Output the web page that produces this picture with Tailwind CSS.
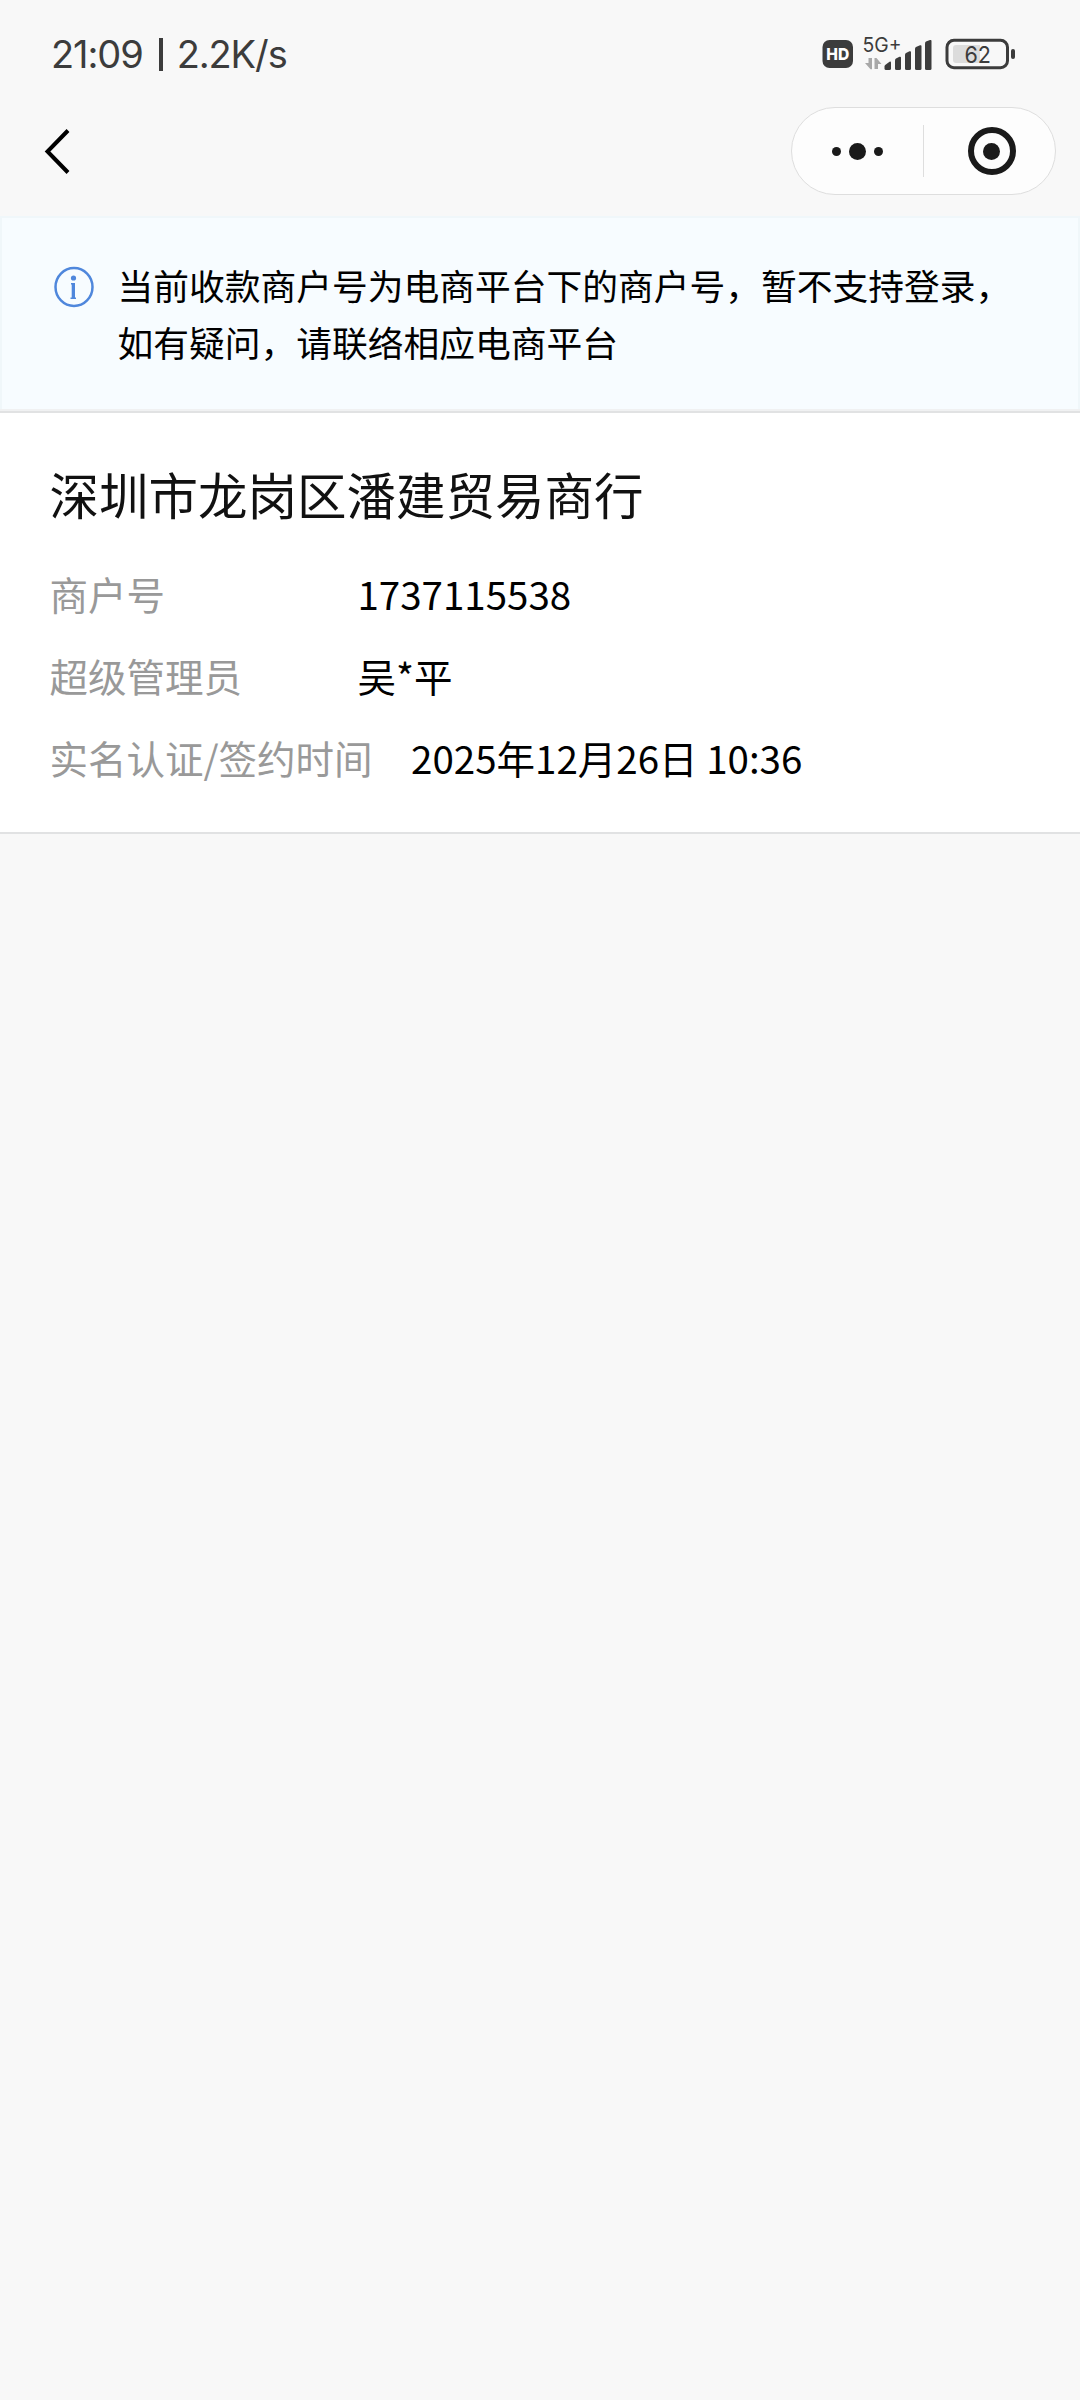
<!DOCTYPE html>
<html lang="zh-CN">
  <head>
    <meta charset="UTF-8" />
    <meta name="viewport" content="width=device-width, initial-scale=1.0" />
    <title>商户信息</title>
    <script src="https://cdn.jsdelivr.net/npm/@tailwindcss/browser@4"></script>
  </head>
  <body class="min-h-screen bg-[#f8f8f8] font-['Noto_Sans_CJK_SC',sans-serif] text-black">
    <!-- Status bar -->
    <div class="flex h-[108px] items-center justify-between pr-[64px] pl-[51px] text-[#3c3c3c]">
      <div class="flex items-center font-['Inter',sans-serif] text-[38px] leading-none tracking-[-1.1px]">
        <span>21:09</span>
        <span class="mr-[14px] ml-[16px] h-[33px] w-[4px] bg-[#3c3c3c]"></span>
        <span>2.2K/s</span>
      </div>
      <div class="flex items-center">
        <svg class="h-[50px] w-[196px]" viewBox="820 29 196 50">
          <rect x="822.5" y="40" width="30.5" height="28" rx="7" fill="#3c3c3c" />
          <text x="837.8" y="59.8" font-family="Inter" font-size="16.5" font-weight="800" text-anchor="middle" textLength="23" lengthAdjust="spacingAndGlyphs" fill="#fff">HD</text>
          <text x="862.5" y="51.8" font-family="Inter" font-size="20" textLength="39" lengthAdjust="spacingAndGlyphs" fill="#3c3c3c">5G+</text>
          <path d="M868.500 58h3.500v11.300h-1.500l-5.500-6.300h3.500zM874.500 58h2l5 6h-3.500v5h-3.500z" fill="#a8a8a8" />
          <g fill="#3c3c3c">
            <path d="M884.500 66.500q0-1 1-1.800l4-3q1.500-.8 1.500.8v6q0 1.500-1.500 1.500h-3.500q-1.500 0-1.500-1.500z" />
            <path d="M895 60.500q0-1.500 1-2l3.500-1.700q1.500-.5 1.500 1v10.700q0 1.500-1.500 1.500h-3q-1.500 0-1.500-1.500z" />
            <path d="M905 55q0-1.500 1-2l3.500-1.700q1.500-.5 1.500 1v16.200q0 1.500-1.500 1.500h-3q-1.500 0-1.500-1.500z" />
            <path d="M915 49q0-1.500 1-2l4-1.700q1.500-.5 1.500 1v22.200q0 1.500-1.500 1.500h-3.500q-1.500 0-1.500-1.500z" />
            <path d="M925 43.500q0-1.500 1-2l4-1.500q1.500-.5 1.500 1v27.500q0 1.500-1.500 1.500h-3.500q-1.500 0-1.500-1.500z" />
          </g>
          <rect x="947" y="40.300" width="60.500" height="27.400" rx="7" fill="none" stroke="#3c3c3c" stroke-width="3" />
          <path d="M956 45h24v18h-24q-3 0-3-3v-12q0-3 3-3z" fill="#dcdcdc" />
          <rect x="1011" y="49" width="4" height="10" rx="2" fill="#3c3c3c" />
          <text x="977.700" y="62.700" font-family="Inter" font-size="23.500" text-anchor="middle" textLength="26.500" lengthAdjust="spacingAndGlyphs" fill="#3c3c3c">62</text>
        </svg>
      </div>
    </div>

    <!-- Navigation bar -->
    <div class="flex h-[108px] items-start justify-between pr-6 pl-11">
      <svg class="mt-[19px] h-[50px] w-[28px]" viewBox="0 0 28 50">
        <path d="M24 3.500L3.500 24.500L24 45.500" fill="none" stroke="#000" stroke-width="4" />
      </svg>
      <div class="-mt-px flex h-[88px] w-[265px] items-center rounded-full border border-[#dedede] bg-[#fdfdfd]">
        <div class="flex w-[131px] items-center justify-center gap-2">
          <span class="size-[9px] rounded-full bg-[#1a1a1a]"></span>
          <span class="size-[17px] rounded-full bg-[#1a1a1a]"></span>
          <span class="size-[9px] rounded-full bg-[#1a1a1a]"></span>
        </div>
        <div class="h-[52px] w-px bg-[#dedede]"></div>
        <div class="flex flex-1 items-center justify-center pl-[4px]">
          <div class="flex size-12 items-center justify-center rounded-full border-6 border-[#1a1a1a]">
            <span class="size-[17px] rounded-full bg-[#1a1a1a]"></span>
          </div>
        </div>
      </div>
    </div>

    <!-- Notice -->
    <div class="flex h-[193px] gap-[23.5px] border-2 border-b-0 border-[#f0f7fa] bg-[#f7fcff] pt-[38px] pl-[52px]">
      <svg class="mt-[10px] h-[42px] w-[40px] shrink-0" viewBox="0 0 40 42" fill="#4f87dc">
        <ellipse cx="20" cy="21" rx="18.500" ry="19" fill="none" stroke="#4f87dc" stroke-width="2.500" />
        <circle cx="19.500" cy="12" r="2.600" />
        <path d="M17 17h4v14.500h1v1.500h-5.500v-1.500h1.200v-13h-.7z" />
      </svg>
      <p class="text-[35.75px] leading-[57px]">
        当前收款商户号为电商平台下的商户号，暂不支持登录，<br />如有疑问，请联络相应电商平台
      </p>
    </div>
    <div class="h-[2px] bg-[#f0f1f2]"></div>

    <!-- Merchant details -->
    <div class="h-[423px] border-y-2 border-[#e1e2e3] bg-white px-[49.5px] pt-[46px]">
      <h1 class="text-[49.5px] leading-[70px] text-[#111]">深圳市龙岗区潘建贸易商行</h1>
      <dl class="mt-[23px] text-[38.5px] leading-[82px]">
        <div class="flex">
          <dt class="w-[308px] text-[#999]">商户号</dt>
          <dd>1737115538</dd>
        </div>
        <div class="flex">
          <dt class="w-[308px] text-[#999]">超级管理员</dt>
          <dd>吴*平</dd>
        </div>
        <div class="flex">
          <dt class="mr-[38.5px] text-[#999]">实名认证/签约时间</dt>
          <dd>2025年12月26日 10:36</dd>
        </div>
      </dl>
    </div>
  </body>
</html>
